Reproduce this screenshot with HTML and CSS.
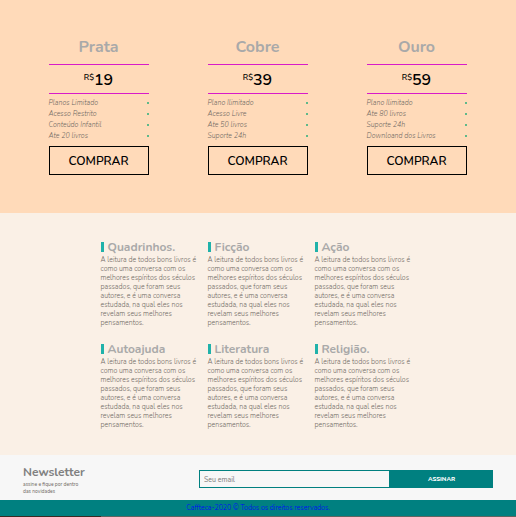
FILE: index.html
```html
<!DOCTYPE html>
<html lang="pt-BR">
<head>
<meta charset="utf-8">
<meta name="viewport" content="width=device-width, initial-scale=1">
<title>Caffteca</title>
<link rel="stylesheet" href="styles.css">
</head>
<body>
<section class="plans">
  <article class="plan">
    <h2 class="plan-name">Prata</h2>
    <p class="price"><sup>R$</sup>19</p>
    <ul class="perks"><li>Planos Limitado</li><li>Acesso Restrito</li><li>Conteúdo Infantil</li><li>Ate 20 livros</li></ul>
    <button class="buy" type="button">COMPRAR</button>
  </article>
  <article class="plan">
    <h2 class="plan-name">Cobre</h2>
    <p class="price"><sup>R$</sup>39</p>
    <ul class="perks"><li>Plano Ilimitado</li><li>Acesso Livre</li><li>Ate 50 livros</li><li>Suporte 24h</li></ul>
    <button class="buy" type="button">COMPRAR</button>
  </article>
  <article class="plan">
    <h2 class="plan-name">Ouro</h2>
    <p class="price"><sup>R$</sup>59</p>
    <ul class="perks"><li>Plano Ilimitado</li><li>Ate 80 livros</li><li>Suporte 24h</li><li>Downloand dos Livros</li></ul>
    <button class="buy" type="button">COMPRAR</button>
  </article>
</section>
<section class="genres">
  <article><h3 class="genre-name">Quadrinhos.</h3><p class="genre-text">A leitura de todos bons livros é<br>como uma conversa com os<br>melhores espíritos dos séculos<br>passados, que foram seus<br>autores, e é uma conversa<br>estudada, na qual eles nos<br>revelam seus melhores<br>pensamentos.</p></article>
  <article><h3 class="genre-name">Ficção</h3><p class="genre-text">A leitura de todos bons livros é<br>como uma conversa com os<br>melhores espíritos dos séculos<br>passados, que foram seus<br>autores, e é uma conversa<br>estudada, na qual eles nos<br>revelam seus melhores<br>pensamentos.</p></article>
  <article><h3 class="genre-name">Ação</h3><p class="genre-text">A leitura de todos bons livros é<br>como uma conversa com os<br>melhores espíritos dos séculos<br>passados, que foram seus<br>autores, e é uma conversa<br>estudada, na qual eles nos<br>revelam seus melhores<br>pensamentos.</p></article>
  <article><h3 class="genre-name">Autoajuda</h3><p class="genre-text">A leitura de todos bons livros é<br>como uma conversa com os<br>melhores espíritos dos séculos<br>passados, que foram seus<br>autores, e é uma conversa<br>estudada, na qual eles nos<br>revelam seus melhores<br>pensamentos.</p></article>
  <article><h3 class="genre-name">Literatura</h3><p class="genre-text">A leitura de todos bons livros é<br>como uma conversa com os<br>melhores espíritos dos séculos<br>passados, que foram seus<br>autores, e é uma conversa<br>estudada, na qual eles nos<br>revelam seus melhores<br>pensamentos.</p></article>
  <article><h3 class="genre-name">Religião.</h3><p class="genre-text">A leitura de todos bons livros é<br>como uma conversa com os<br>melhores espíritos dos séculos<br>passados, que foram seus<br>autores, e é uma conversa<br>estudada, na qual eles nos<br>revelam seus melhores<br>pensamentos.</p></article>
</section>
<section class="newsletter">
  <div class="news-intro">
    <h2 class="news-title">Newsletter</h2>
    <p class="news-text">assine e fique por dentro<br>das novidades</p>
  </div>
  <form class="news-form">
    <input class="email" type="email" placeholder="Seu email" aria-label="Seu email">
    <button class="subscribe" type="button">ASSINAR</button>
  </form>
</section>
<footer class="footer"><a href="#">Caffteca-2020 © Todos os direitos reservados.</a></footer>
</body>
</html>
```
FILE: styles.css
```css
* {
  box-sizing: border-box;
  margin: 0;
  padding: 0;
}

body {
  font-family: Nunito, Lato, "Noto Sans", sans-serif;
  color: #6e6862;
  background: linear-gradient(90deg, #3b2a22 101px, #5f6660 101px);
}

.plans {
  display: grid;
  grid-template-columns: repeat(3, 1fr);
  justify-items: center;
  padding: 36px 20px 38px 19px;
  background: #ffdab9;
}

.plan {
  width: 100px;
}

.plan-name {
  padding-bottom: 6px;
  font-size: 16px;
  line-height: 22px;
  text-align: center;
  color: #a9a9a9;
}

.price {
  height: 30px;
  border: solid #d81bc8;
  border-width: 1px 0;
  font-size: 16px;
  font-weight: 600;
  line-height: 30px;
  text-align: center;
  color: #000;
}

.price sup {
  font-size: 8px;
  font-weight: 600;
  line-height: 1;
  vertical-align: 5px;
}

.perks {
  padding: 3px 0 5px;
  list-style: none;
  font-size: 7px;
  font-style: italic;
  font-weight: 300;
  line-height: 11px;
}

.perks li {
  display: flex;
  align-items: center;
  justify-content: space-between;
  white-space: nowrap;
}

.perks li::after {
  content: "";
  width: 2px;
  height: 2px;
  background: #5fb98a;
}

.buy {
  width: 100%;
  height: 29px;
  border: 1px solid #000;
  background: transparent;
  font: 600 12px/16px Nunito, Lato, sans-serif;
  color: #000;
}

.genres {
  display: grid;
  grid-template-columns: repeat(3, 95px);
  gap: 12px;
  justify-content: center;
  padding: 27px 6px 23px 0;
  background: #faf0e6;
}

.genre-name {
  display: flex;
  align-items: center;
  gap: 4px;
  font-size: 12px;
  line-height: 15px;
  color: #a9a9a9;
}

.genre-name::before {
  content: "";
  width: 3px;
  height: 10px;
  margin-bottom: 2px;
  background: #20b2aa;
}

.genre-text {
  padding-bottom: 3px;
  font-size: 7px;
  font-weight: 300;
  line-height: 9px;
  white-space: nowrap;
}

.newsletter {
  display: flex;
  justify-content: space-between;
  padding: 9px 23px 5px;
  background: #f7f7f7;
}

.news-title {
  font-size: 12px;
  font-weight: 700;
  line-height: 17px;
  color: #808080;
}

.news-text {
  font-size: 5px;
  line-height: 7px;
}

.news-form {
  display: flex;
  width: 294px;
  height: 18px;
  margin-top: 6px;
}

.email {
  flex: 1;
  min-width: 0;
  padding: 0 4px;
  border: 1px solid #008080;
  background: transparent;
  font: 7px/9px Nunito, Lato, sans-serif;
}

.email::placeholder {
  color: #777;
}

.subscribe {
  width: 103px;
  border: 0;
  background: #008080;
  font: 800 6px/8px Nunito, Lato, sans-serif;
  color: #fff;
}

.footer {
  height: 16px;
  background: #008080;
  font-size: 7px;
  font-weight: 300;
  line-height: 15px;
  text-align: center;
}

.footer a {
  color: #00f;
  text-decoration: none;
}
```
